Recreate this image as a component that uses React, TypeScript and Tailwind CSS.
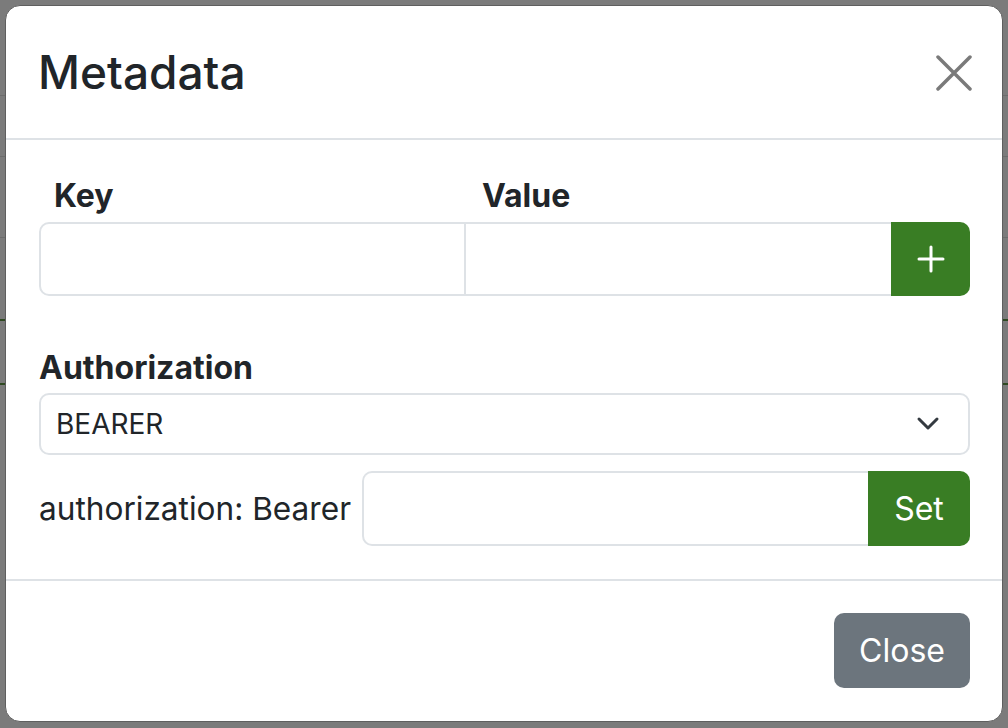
function PageBehind() {
  // faint page content showing at the edges of the backdrop
  return (
    <div className="flex flex-col">
      <div className="h-[96px] border-b border-[#6c6c6c]" />
      <div className="h-[61px] border-b border-[#6c6c6c]" />
      <div className="h-[81px] border-b border-[#6c6c6c]" />
      <div className="h-[83px] border-b-2 border-[#2f4a22]" />
      <div className="h-[64px] border-b-2 border-[#2f4a22]" />
    </div>
  )
}

function CloseIcon() {
  return (
    <svg width="36" height="36" viewBox="0 0 36 36" fill="none">
      <path d="M2 2L34 34M34 2L2 34" stroke="#7a7a7a" strokeWidth="3.5" strokeLinecap="round" />
    </svg>
  )
}

function Chevron() {
  return (
    <svg width="24" height="16" viewBox="0 0 24 16" fill="none">
      <polyline points="3,3 12,12 21,3" stroke="#343a40" strokeWidth="3" strokeLinecap="round" strokeLinejoin="round" />
    </svg>
  )
}

function Plus() {
  return (
    <svg width="28" height="28" viewBox="0 0 28 28" fill="none">
      <path d="M14 2v24M2 14h24" stroke="white" strokeWidth="3" strokeLinecap="round" />
    </svg>
  )
}

export default function App() {
  return (
    <div className="relative h-[728px] w-[1008px] overflow-hidden bg-[#7b7b7b] font-[Inter,'Noto_Sans',sans-serif] text-[#212529]">
      <PageBehind />

      {/* Modal */}
      <div className="absolute inset-0 pt-[5px] pr-[5px] pb-[6px] pl-[5px]">
        <div className="flex h-full flex-col rounded-[15px] border border-[#5f5f5f] bg-white">
          {/* Header */}
          <div className="flex h-[134px] items-center justify-between border-b-2 border-[#dee2e6] pl-[32px] pr-[30px]">
            <h4 className="text-[46px] font-medium leading-none">Metadata</h4>
            <button className="mt-[2px]">
              <CloseIcon />
            </button>
          </div>

          {/* Body */}
          <div className="border-b-2 border-[#dee2e6] pt-[32px] pr-[32px] pb-[33px] pl-[33px]">
            <div className="flex h-[48px] text-[32px] font-bold leading-[48px]">
              <div className="w-[443px] pl-[15px]">Key</div>
              <div>Value</div>
            </div>
            <div className="mt-[2px] flex h-[74px]">
              <input className="w-[427px] rounded-l-[10px] border-2 border-[#dee2e6] outline-none" />
              <input className="min-w-0 flex-1 border-2 border-l-0 border-r-0 border-[#dee2e6] outline-none" />
              <button className="flex w-[79px] items-center justify-center rounded-r-[10px] bg-[#397d24]">
                <Plus />
              </button>
            </div>

            <div className="mt-[48px] h-[48px] text-[32px] font-bold leading-[48px]">Authorization</div>
            <div className="mt-[1px] flex h-[62px] items-center justify-between rounded-[10px] border-2 border-[#dee2e6] pl-[15px] pr-[28px] text-[28px]">
              <span>BEARER</span>
              <Chevron />
            </div>

            <div className="mt-[16px] flex h-[75px] items-center">
              <div className="w-[323px] text-[31.6px]">authorization: Bearer</div>
              <input className="h-full min-w-0 flex-1 rounded-l-[10px] border-2 border-r-0 border-[#dee2e6] outline-none" />
              <button className="h-full w-[102px] rounded-r-[10px] bg-[#397d24] text-[32px] text-white">Set</button>
            </div>
          </div>

          {/* Footer */}
          <div className="flex flex-1 items-start justify-end pt-[32px] pr-[32px]">
            <button className="h-[75px] w-[136px] rounded-[10px] bg-[#6c757d] text-[32px] text-white">Close</button>
          </div>
        </div>
      </div>
    </div>
  )
}
